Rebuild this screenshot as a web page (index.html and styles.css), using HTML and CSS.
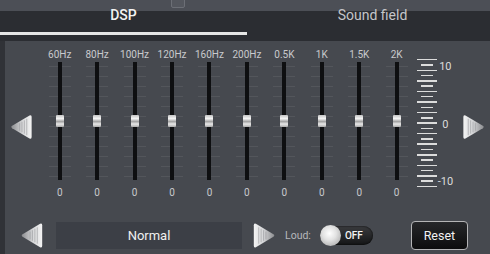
FILE: index.html
```html
<!DOCTYPE html>
<html lang="en">
<head>
  <meta charset="UTF-8" />
  <title>DSP</title>
  <link rel="stylesheet" href="styles.css">
</head>
<body>
  <div class="screen">
    <div class="header">
      <span class="notch"></span>
      <div class="tab active">DSP</div>
      <div class="tab second">Sound field</div>
    </div>

    <div class="panel">
      <div class="main">
        <svg class="arrow big" viewBox="0 0 22 26"><use href="#arw"/></svg>

        <div class="eq">
          <div class="band"><span class="freq">60Hz</span><div class="track"><span class="knob"></span></div><span class="val">0</span></div>
          <div class="band"><span class="freq">80Hz</span><div class="track"><span class="knob"></span></div><span class="val">0</span></div>
          <div class="band"><span class="freq">100Hz</span><div class="track"><span class="knob"></span></div><span class="val">0</span></div>
          <div class="band"><span class="freq">120Hz</span><div class="track"><span class="knob"></span></div><span class="val">0</span></div>
          <div class="band"><span class="freq">160Hz</span><div class="track"><span class="knob"></span></div><span class="val">0</span></div>
          <div class="band"><span class="freq">200Hz</span><div class="track"><span class="knob"></span></div><span class="val">0</span></div>
          <div class="band"><span class="freq">0.5K</span><div class="track"><span class="knob"></span></div><span class="val">0</span></div>
          <div class="band"><span class="freq">1K</span><div class="track"><span class="knob"></span></div><span class="val">0</span></div>
          <div class="band"><span class="freq">1.5K</span><div class="track"><span class="knob"></span></div><span class="val">0</span></div>
          <div class="band"><span class="freq">2K</span><div class="track"><span class="knob"></span></div><span class="val">0</span></div>
        </div>

        <div class="scale">
          <div class="ticks"></div>
          <div class="marks"><span>10</span><span>0</span><span>-10</span></div>
        </div>

        <svg class="arrow big flip" viewBox="0 0 22 26"><use href="#arw"/></svg>
      </div>

      <div class="bottom">
        <svg class="arrow small" viewBox="0 0 22 26"><use href="#arw"/></svg>
        <div class="preset">Normal</div>
        <svg class="arrow small flip" viewBox="0 0 22 26"><use href="#arw"/></svg>
        <span class="loud">Loud:</span>
        <div class="toggle"><span class="dot"></span><span>OFF</span></div>
        <button class="reset">Reset</button>
      </div>
    </div>
  </div>

  <svg width="0" height="0" style="position:absolute">
    <defs>
      <linearGradient id="silver" x1="0" y1="0" x2="1" y2="0">
        <stop offset="0" stop-color="#8c8d90"/>
        <stop offset="0.55" stop-color="#d6d7d9"/>
        <stop offset="1" stop-color="#f4f4f4"/>
      </linearGradient>
      <g id="arw">
        <path d="M1.2 11.8 L19.4 0.9 Q21.6 -0.2 21.6 2.4 L21.6 23.6 Q21.6 26.2 19.4 25.1 L1.2 14.2 Q-0.6 13 1.2 11.8 Z" fill="url(#silver)"/>
        <g stroke="#9a9b9e" stroke-width="0.8" opacity="0.8">
          <line x1="9" y1="9" x2="9" y2="17"/>
          <line x1="11.5" y1="7.5" x2="11.5" y2="18.5"/>
          <line x1="14" y1="6" x2="14" y2="20"/>
          <line x1="16.5" y1="4.5" x2="16.5" y2="21.5"/>
        </g>
      </g>
    </defs>
  </svg>
</body>
</html>
```

FILE: styles.css
```css
:root {
  --top: #4c4f56;
  --bar: #2b2d32;
  --panel: #46494f;
  --side: #303237;
  --text: #d4d5d8;
}

body {
  margin: 0;
  background: var(--side);
  font-family: Roboto, "Noto Sans", sans-serif;
  color: var(--text);
}

.screen {
  width: 490px;
  height: 254px;
  overflow: hidden;
}

/* tab header */
.header {
  position: relative;
  display: flex;
  height: 41px;
  background: linear-gradient(var(--top) 0 11px, var(--bar) 11px);
}

.notch {
  position: absolute;
  left: 171px;
  top: -2px;
  width: 12px;
  height: 8px;
  border: 1px solid #6c6f76;
  border-radius: 2px;
  background: #54575e;
}

.tab {
  flex: 1;
  height: 32px;
  font-size: 14px;
  line-height: 30px;
  text-align: center;
  color: #c4c5c9;
}

.tab.active {
  flex: none;
  width: 247px;
  color: #f2f2f2;
  font-weight: 500;
  border-bottom: 3px solid #e6e6e6;
}

.tab.second {
  padding-left: 8px;
}

/* main panel */
.panel {
  margin-left: 5px;
  height: 213px;
  background: var(--panel);
}

.main {
  display: flex;
  align-items: flex-start;
  height: 170px;
}

.arrow {
  display: block;
  flex: none;
}

.arrow.flip {
  transform: scaleX(-1);
}

.arrow.big {
  width: 21px;
  height: 26px;
  margin-top: 73px;
}

.main .arrow.big:first-child {
  margin-left: 6px;
}

.main .arrow.flip {
  margin-left: 10px;
}

.eq {
  display: flex;
  margin-left: 9px;
  margin-top: 8px;
}

.band {
  width: 37.45px;
  display: flex;
  flex-direction: column;
  align-items: center;
}

.freq,
.val {
  font-size: 10px;
  line-height: 12px;
  color: #c9cacd;
  white-space: nowrap;
}

.track {
  position: relative;
  width: 22px;
  height: 118px;
  margin-top: 1px;
  background: repeating-linear-gradient(to bottom, transparent 0 4px, rgba(255, 255, 255, 0.07) 4px 5px, transparent 5px 10px);
}

.track:before {
  content: "";
  position: absolute;
  left: 9px;
  top: 0;
  width: 4px;
  height: 100%;
  background: #0e0f11;
}

.knob {
  position: absolute;
  left: 7px;
  top: 53px;
  width: 8px;
  height: 12px;
  border-radius: 1px;
  background: linear-gradient(to bottom, #c4c4c4 0, #f4f4f4 30%, #a2a2a2 55%, #e8e8e8 75%, #ababab 100%);
}

.val {
  margin-top: 7px;
}

/* right scale */
.scale {
  display: flex;
  margin-left: 2px;
  margin-top: 18px;
}

.ticks {
  width: 20px;
  height: 128px;
  background:
    repeating-linear-gradient(to bottom, #dcdcdc 0 1.5px, transparent 1.5px 10.56px) center / 20px 100% no-repeat,
    repeating-linear-gradient(to bottom, transparent 0 5.28px, #dcdcdc 5.28px 6.78px, transparent 6.78px 10.56px) center / 12px 100% no-repeat;
}

.marks {
  width: 16px;
  height: 127px;
  display: flex;
  flex-direction: column;
  justify-content: space-between;
  align-items: center;
  font-size: 11px;
  line-height: 12px;
  color: #dcdcdc;
  margin-top: 2px;
}

/* bottom row */
.bottom {
  display: flex;
  align-items: center;
  height: 29px;
  margin-top: 10px;
  padding-left: 16px;
}

.arrow.small {
  width: 22px;
  height: 25px;
}

.preset {
  width: 186px;
  height: 27px;
  margin: 0 11px 0 13px;
  background: #3c3f46;
  color: #f0f0f0;
  font-size: 13px;
  line-height: 27px;
  text-align: center;
}

.loud {
  margin-left: 10px;
  font-size: 10.5px;
  color: #b7b8bb;
}

.toggle {
  display: flex;
  align-items: center;
  gap: 4px;
  width: 53px;
  height: 19px;
  margin-left: 9px;
  border-radius: 10px;
  background: linear-gradient(to bottom, #3a3b3e, #141516);
  box-shadow: inset 0 0 2px #000;
  color: #f4f4f4;
  font-size: 10px;
  font-weight: 500;
}

.dot {
  width: 21px;
  height: 21px;
  border-radius: 50%;
  background: radial-gradient(circle at 45% 40%, #ffffff 0, #e2e2e2 40%, #9a9a9a 100%);
}

.reset {
  width: 57px;
  height: 29px;
  margin-left: 38px;
  padding: 0;
  border: 1.5px solid #b4b4b6;
  border-radius: 4px;
  background: linear-gradient(to bottom, #26272a, #0c0c0d);
  color: #f2f2f2;
  font-family: Roboto, "Noto Sans", sans-serif;
  font-size: 12.5px;
}
```
